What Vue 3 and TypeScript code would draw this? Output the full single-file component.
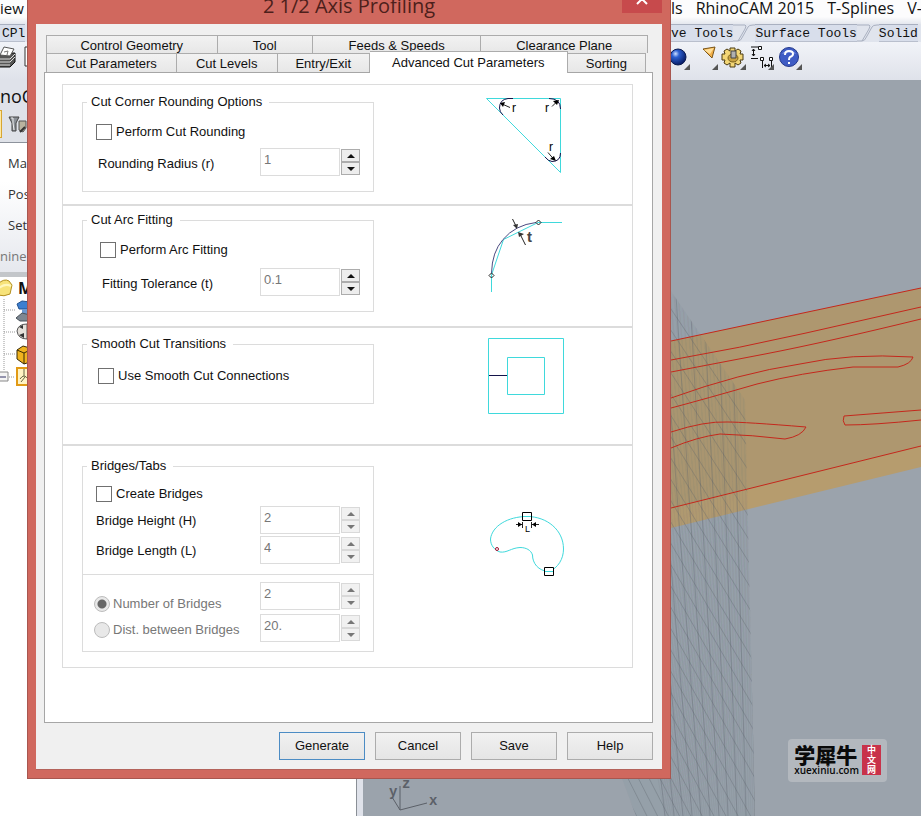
<script setup lang="ts">
import { reactive, ref } from 'vue'

interface Tab {
  label: string
  grow: number
  active?: boolean
}

interface Line {
  x1: number
  y1: number
  x2: number
  y2: number
}

const backTabs: Tab[] = [
  { label: 'Control Geometry', grow: 171 },
  { label: 'Tool', grow: 95 },
  { label: 'Feeds & Speeds', grow: 169 },
  { label: 'Clearance Plane', grow: 167 },
]

const frontTabs: Tab[] = [
  { label: 'Cut Parameters', grow: 130 },
  { label: 'Cut Levels', grow: 101 },
  { label: 'Entry/Exit', grow: 92 },
  { label: 'Advanced Cut Parameters', grow: 199, active: true },
  { label: 'Sorting', grow: 78 },
]

const form = reactive({
  rounding: false,
  radius: '1',
  arcFitting: false,
  tolerance: '0.1',
  smooth: false,
  bridges: false,
  height: '2',
  length: '4',
  count: '2',
  distance: '20.',
})

const spacingMode = ref<'count' | 'distance'>('count')
const actions = ['Generate', 'Cancel', 'Save', 'Help']
const machineRows = ['Ma', 'Pos', 'Set']

function step(key: 'radius' | 'tolerance', delta: number): void {
  form[key] = String(Math.max(0, Math.round((Number(form[key]) + delta) * 10) / 10))
}

// Wire mesh of the stock wall: leaning uprights crossed by falling diagonals.
const uprights: Line[] = Array.from({ length: 11 }, (_, i) => {
  const top = 745 - i * 14
  return { x1: top, y1: 280, x2: top + 10 + i * 5, y2: 816 }
})
const diagonals: Line[] = Array.from({ length: 36 }, (_, i) => {
  const y = 291 + i * 20 - 108
  return { x1: 600, y1: y, x2: 760, y2: y + 236 + i * 3 }
})
const fineLines: Line[] = Array.from({ length: 46 }, (_, i) => {
  const top = 745 - i * 4
  return { x1: top, y1: 280, x2: top + 10 + i * 2, y2: 816 }
})
</script>

<template>
  <div class="app">
    <nav class="menubar">
      <div class="covered"><a href="#">iew</a></div>
      <div class="exposed">
        <a href="#">ls</a>
        <a href="#">RhinoCAM 2015</a>
        <a href="#">T-Splines</a>
        <a href="#">V-</a>
      </div>
    </nav>

    <div class="tooltabs">
      <div class="covered"><button class="tooltab first">CPl</button></div>
      <div class="exposed">
        <button class="tooltab">ve Tools</button>
        <svg class="slant" viewBox="0 0 22 18"><path d="M0 1H12Q14 1 12 5L5 17H0M5 17Q8 17 10 12L15 3Q16 1 20 1H22" /></svg>
        <button class="tooltab">Surface Tools</button>
        <svg class="slant" viewBox="0 0 22 18"><path d="M0 1H12Q14 1 12 5L5 17H0M5 17Q8 17 10 12L15 3Q16 1 20 1H22" /></svg>
        <button class="tooltab">Solid</button>
      </div>
    </div>

    <div class="toolbar">
      <div class="covered">
        <button class="tool printer" aria-label="Print">
          <svg viewBox="0 0 28 38">
            <path d="M-2 15L3 11H15V20L10 25H-2Z" fill="#555" stroke="#111" />
            <path d="M0 13L4 5L14 7L10 14Z" fill="#fff" stroke="#555" />
            <path d="M-2 17H10L15 12M-2 20H10L15 15M-2 23H10" stroke="#ddd" fill="none" />
            <path d="M4 10L8 9L7 13" stroke="#777" fill="none" />
            <path d="M28 5H25V24H28" stroke="#333" fill="#fff" />
          </svg>
        </button>
      </div>
      <div class="exposed">
        <button class="tool" aria-label="Shade">
          <svg viewBox="0 0 28 38">
            <defs>
              <radialGradient id="ball" cx="0.35" cy="0.3" r="0.75">
                <stop offset="0" stop-color="#cfe0ff" />
                <stop offset="0.3" stop-color="#2c5fd0" />
                <stop offset="1" stop-color="#04165e" />
              </radialGradient>
            </defs>
            <circle cx="16" cy="15" r="8" fill="url(#ball)" stroke="#0a1a50" />
            <path class="corner" d="M28 22V28H22Z" />
          </svg>
        </button>
        <button class="tool" aria-label="Spotlight">
          <svg viewBox="0 0 28 38">
            <path d="M13 7L25 5L22 16Z" fill="#f2b04a" stroke="#7a5518" />
            <path d="M14 8L24 6L20 12Z" fill="#ffdf9a" />
            <path class="corner" d="M28 22V28H22Z" />
          </svg>
        </button>
        <button class="tool" aria-label="Options">
          <svg viewBox="0 0 28 38">
            <path d="M12 9V6H17V9L20 7L23 9L22 12H25V18H22L23 21L20 23L17 21V25H12V21L9 23L6 21L7 18H4V12H7L6 9L9 7Z" fill="#f3d676" stroke="#4a3a10" />
            <ellipse cx="15" cy="16" rx="5" ry="4" fill="#c9a242" stroke="#7a611c" />
            <path d="M13 9H18V16H13Z" fill="#b0b0b0" stroke="#444" />
            <path class="corner" d="M28 22V28H22Z" />
          </svg>
        </button>
        <button class="tool" aria-label="Dimension">
          <svg viewBox="0 0 28 38">
            <path d="M5 5H12M7.500 7V14M5 16.500H12M16.500 18V26M25.500 18V26M18 23.500H24M6 9L7.500 7L9 9M6 12L7.500 14L9 12M20 22L18 23.500L20 25M22 22L24 23.500L22 25" fill="none" stroke="#111" />
            <path d="M12.500 4.500H15.500V7.500H12.500ZM14.500 15.500H17.500V18.500H14.500ZM23.500 15.500H26.500V18.500H23.500Z" fill="#fff" stroke="#111" />
            <path class="corner" d="M28 22V28H22Z" />
          </svg>
        </button>
        <button class="tool" aria-label="Help topics">
          <svg viewBox="0 0 28 38">
            <circle cx="15" cy="15" r="9.500" fill="#3f5cc4" stroke="#24398c" />
            <path d="M8 12A8 7 0 0 1 22 12Q15 9 8 12Z" fill="#7f97e6" />
            <path d="M11 13Q11 9 15 9Q19 9 19 12Q19 14 16 15Q15 16 15 18M15 20V22" fill="none" stroke="#fff" stroke-width="2" />
            <path class="corner" d="M28 22V28H22Z" />
          </svg>
        </button>
      </div>
    </div>

    <div class="workspace">
      <aside class="sidebar">
        <h2>noC</h2>
        <div class="strip">
          <span class="picked"></span>
          <svg width="20" height="20" viewBox="0 0 20 20">
            <path d="M1 2H11L8 8V16H4V8Z" fill="#8b9096" stroke="#444" />
            <path d="M3 3H5V8L6 15" stroke="#eee" fill="none" />
            <path d="M11 6H18V13L15 17L11 15Z" fill="#b9b39f" stroke="#555" />
            <path d="M12 17L17 12" stroke="#333" stroke-width="2" />
          </svg>
        </div>
        <div class="machine">
          <p v-for="row in machineRows" :key="row">{{ row }}</p>
          <p class="caption">nine S</p>
        </div>
        <div class="tree">
          <svg class="tree-art" width="27" height="110" viewBox="0 0 27 110">
            <path d="M4 22V94M4 33H16M4 55H16M4 77H16M9 100H15" fill="none" stroke="#999" stroke-dasharray="1 1" />
            <path d="M-2 7Q4 1 9 4L12 8L10 17Q4 20 -2 18Z" fill="#f7e37a" stroke="#b38f1e" />
            <path d="M-1 11Q5 6 11 9" stroke="#fff7bd" stroke-width="2" fill="none" />
            <path d="M17 27L22 24L30 25V32H19Z" fill="#3d7fd0" stroke="#23528f" />
            <path d="M22 32H27V39H22Z" fill="#6d99d0" />
            <path d="M16 41L22 36L30 38V44H20Z" fill="#7d8792" stroke="#4b535b" />
            <path d="M17 54Q18 47 27 47V62Q18 62 17 54Z" fill="#e4e0da" stroke="#555" />
            <path d="M19 50L23 48V52ZM19 58L24 56V61Z" fill="#333" />
            <path d="M17 73L23 69L30 71V85L24 87L17 82Z" fill="#f0b31f" stroke="#392a05" />
            <path d="M17 73L24 76L30 73M24 76V87" fill="none" stroke="#392a05" />
            <path d="M17 91H30V108H17Z" fill="#fff3c4" stroke="#e19a15" stroke-width="2" />
            <path d="M24 92V99M20 102Q24 96 28 102M21 105L25 100" stroke="#664" fill="none" />
            <path d="M-4 95H8V104H-4Z" fill="#f4f4f4" stroke="#888" />
            <path d="M-1 100H6" stroke="#336" />
          </svg>
          <strong>M</strong>
        </div>
      </aside>
      <div class="splitter"></div>

      <main class="viewport">
        <svg class="scene" viewBox="363 80 558 736" preserveAspectRatio="xMaxYMin slice">
          <defs>
            <clipPath id="wall">
              <path d="M671 291L745 400L755 816H636L600 720V291Z" />
            </clipPath>
          </defs>
          <path d="M600 356L671 341L921 288V467L671 528L600 545Z" fill="#b69c6e" />
          <path d="M600 356L671 341L921 288V446L671 508L600 526Z" fill="#ae976f" />
          <g clip-path="url(#wall)">
            <path d="M600 280H760V816H600Z" fill="#7d8590" opacity="0.1" />
            <line v-for="(l, i) in fineLines" :key="'f' + i" v-bind="l" stroke="#6b727c" stroke-width="0.7" opacity="0.14" />
            <line v-for="(l, i) in diagonals" :key="'d' + i" v-bind="l" stroke="#5c636c" stroke-width="0.6" opacity="0.55" />
            <line v-for="(l, i) in uprights" :key="'u' + i" v-bind="l" stroke="#5c636c" stroke-width="0.7" opacity="0.5" />
          </g>
          <g fill="none" stroke="#c4281c">
            <path d="M671 341L921 288" />
            <path d="M671 360Q740 348 806 333L921 307" />
            <path d="M671 372L765 354Q827 342 921 319" />
            <path d="M671 398Q740 373 800 364Q850 353 913 357Q911 364 898 367H853Q800 373 757 384Q705 399 671 408" />
            <path d="M671 432Q705 421 727 422Q745 422 806 427Q802 436 785 439Q752 435 720 434Q697 437 671 448" />
            <path d="M921 410L844 416Q842 421 845 425Q873 425 921 420" />
            <path d="M671 508L921 446" />
          </g>
          <g class="axes">
            <path d="M392 797L400 810V786M400 810L427 803" />
            <text x="402" y="788">z</text>
            <text x="429" y="805">x</text>
            <text x="389" y="796">y</text>
          </g>
        </svg>
        <div class="watermark">
          <div class="brand">
            <span class="brand-name">学犀牛</span>
            <span class="brand-url">xuexiniu.com</span>
          </div>
          <div class="seal"><span>中</span><span>文</span><span>网</span></div>
        </div>
      </main>
    </div>

    <section class="dialog" role="dialog" aria-labelledby="dialog-title">
      <header>
        <h1 id="dialog-title">2 1/2 Axis Profiling</h1>
        <button class="close" aria-label="Close">
          <svg width="12" height="12" viewBox="0 0 12 12"><path d="M1 1L11 11M11 1L1 11" stroke="#fff" stroke-width="2" /></svg>
        </button>
      </header>

      <div class="client">
        <div class="tabs" role="tablist">
          <div class="tabrow back">
            <button v-for="t in backTabs" :key="t.label" role="tab" :style="{ flexGrow: t.grow }">{{ t.label }}</button>
          </div>
          <div class="tabrow">
            <button
              v-for="t in frontTabs"
              :key="t.label"
              role="tab"
              :class="{ active: t.active }"
              :aria-selected="!!t.active"
              :style="{ flexGrow: t.grow }"
            >{{ t.label }}</button>
          </div>
        </div>

        <div class="page">
          <div class="options">
            <div class="group rounding">
              <fieldset>
                <legend>Cut Corner Rounding Options</legend>
                <label class="check"><input v-model="form.rounding" type="checkbox" />Perform Cut Rounding</label>
                <div class="field">
                  <label for="radius">Rounding Radius (r)</label>
                  <div class="spinner">
                    <input id="radius" v-model="form.radius" type="text" />
                    <span class="arrows">
                      <button aria-label="Increase radius" @click="step('radius', 1)"><i class="up"></i></button>
                      <button aria-label="Decrease radius" @click="step('radius', -1)"><i class="down"></i></button>
                    </span>
                  </div>
                </div>
              </fieldset>
              <svg class="figure" width="90" height="82" viewBox="482 94 90 82">
                <path class="cyan" d="M486.500 98.500H560.500V172.500Z" />
                <path class="navy" d="M513 98.500H508Q499.500 99.500 499.500 108Q499.500 112 503 115M549 98.500Q560.500 98.500 560.500 109M560.500 153Q560.500 161.500 552 161.500Q548 161 545 157" />
                <path class="ink" d="M501 103.500L510 107.500M552 106.500L557 101.500M548 152.500L554 159.500" />
                <path d="M500 103L505 102L503 107ZM559 100L557 105L553 101ZM556 161L550 159L554 156Z" />
                <text x="512" y="112">r</text>
                <text x="545" y="112">r</text>
                <text x="549" y="151">r</text>
              </svg>
            </div>

            <div class="group fitting">
              <fieldset>
                <legend>Cut Arc Fitting</legend>
                <label class="check"><input v-model="form.arcFitting" type="checkbox" />Perform Arc Fitting</label>
                <div class="field">
                  <label for="tolerance">Fitting Tolerance (t)</label>
                  <div class="spinner">
                    <input id="tolerance" v-model="form.tolerance" type="text" />
                    <span class="arrows">
                      <button aria-label="Increase tolerance" @click="step('tolerance', 0.1)"><i class="up"></i></button>
                      <button aria-label="Decrease tolerance" @click="step('tolerance', -0.1)"><i class="down"></i></button>
                    </span>
                  </div>
                </div>
              </fieldset>
              <svg class="figure" width="90" height="84" viewBox="482 212 90 84">
                <path class="cyan" d="M491.500 292V275L503.500 239.500L538 222.500H562" />
                <path class="navy soft" d="M491.500 273Q492 252 503 239.500Q515 225 536 222.500" />
                <path class="ink" d="M489 275.500L491.500 273L494 275.500L491.500 278ZM536 222.500L538.500 220L541 222.500L538.500 225ZM512.500 219L516.500 227M525.500 245L520.500 235" />
                <path d="M513 225L518 224L517 229ZM518 232L524 234L519 237Z" fill="#333" />
                <text class="tee" x="527" y="242">t</text>
              </svg>
            </div>

            <div class="group smooth">
              <fieldset>
                <legend>Smooth Cut Transitions</legend>
                <label class="check"><input v-model="form.smooth" type="checkbox" />Use Smooth Cut Connections</label>
              </fieldset>
              <svg class="figure" width="90" height="82" viewBox="482 336 90 82">
                <path class="cyan" d="M488.500 338.500H563.500V413.500H488.500ZM507.500 357.500H544.500V394.500H507.500Z" />
                <path class="navy" d="M489 375.500H507" />
              </svg>
            </div>

            <div class="group bridges">
              <fieldset>
                <legend>Bridges/Tabs</legend>
                <label class="check"><input v-model="form.bridges" type="checkbox" />Create Bridges</label>
                <div class="field">
                  <label for="height">Bridge Height (H)</label>
                  <div class="spinner">
                    <input id="height" v-model="form.height" type="text" disabled />
                    <span class="arrows">
                      <button aria-label="Increase height" disabled><i class="up"></i></button>
                      <button aria-label="Decrease height" disabled><i class="down"></i></button>
                    </span>
                  </div>
                </div>
                <div class="field">
                  <label for="length">Bridge Length (L)</label>
                  <div class="spinner">
                    <input id="length" v-model="form.length" type="text" disabled />
                    <span class="arrows">
                      <button aria-label="Increase length" disabled><i class="up"></i></button>
                      <button aria-label="Decrease length" disabled><i class="down"></i></button>
                    </span>
                  </div>
                </div>
                <div class="spacing">
                  <div class="field lowered">
                    <label class="choice"><input v-model="spacingMode" type="radio" name="mode" value="count" disabled />Number of Bridges</label>
                    <div class="spinner">
                      <input v-model="form.count" type="text" aria-label="Number of Bridges" disabled />
                      <span class="arrows">
                        <button aria-label="Increase count" disabled><i class="up"></i></button>
                        <button aria-label="Decrease count" disabled><i class="down"></i></button>
                      </span>
                    </div>
                  </div>
                  <div class="field">
                    <label class="choice"><input v-model="spacingMode" type="radio" name="mode" value="distance" disabled />Dist. between Bridges</label>
                    <div class="spinner">
                      <input v-model="form.distance" type="text" aria-label="Dist. between Bridges" disabled />
                      <span class="arrows">
                        <button aria-label="Increase distance" disabled><i class="up"></i></button>
                        <button aria-label="Decrease distance" disabled><i class="down"></i></button>
                      </span>
                    </div>
                  </div>
                </div>
              </fieldset>
              <svg class="figure" width="90" height="122" viewBox="482 458 90 122">
                <path class="cyan" d="M549 571.500C538 571 532.500 563 532.500 555C531 550 526 547.500 520 547.500C511 548 507 553 500 552C494 550 490.500 545 490.500 539C492 526 508 516.500 527 516.500C547 516.500 563.500 530 563.500 549C563.500 559 558 568 549 571.500Z" />
                <path class="box" d="M522.500 512.500H531.500V520.500H522.500ZM544.500 567.500H553.500V575.500H544.500Z" />
                <path class="ink" d="M522.500 522V528M531.500 522V528M516 524.500H522M532 524.500H539" />
                <path d="M522 524.500L518 522V527ZM532 524.500L536 522V527Z" />
                <path class="cyan" d="M523 516.500H531M545 571.500H553" />
                <circle cx="497" cy="549" r="1.500" fill="#fff" stroke="#a01030" />
                <text class="ell" x="525" y="532">L</text>
              </svg>
            </div>
          </div>
        </div>

        <footer>
          <button v-for="(a, i) in actions" :key="a" :class="{ primary: i === 0 }">{{ a }}</button>
        </footer>
      </div>
    </section>
  </div>
</template>

<style>
body {
  margin: 0;
}
</style>

<style scoped>
* {
  box-sizing: border-box;
}

.app {
  --dialog-right: 250px;
  position: relative;
  display: flex;
  flex-direction: column;
  min-height: 100vh;
  overflow: hidden;
  background: #fff;
  color: #111;
  font: 13px/16px "Liberation Sans", Arial, sans-serif;
}

button,
input {
  margin: 0;
  font: inherit;
  color: inherit;
}

a {
  color: inherit;
  text-decoration: none;
}

.menubar,
.tooltabs,
.toolbar {
  display: grid;
  grid-template-columns: 1fr var(--dialog-right);
  white-space: nowrap;
}

.covered,
.exposed {
  display: flex;
  min-width: 0;
}

.menubar {
  height: 24px;
  background: linear-gradient(#fcfcfd 70%, #e4e7ee);
  font: 16px/16px "Open Sans", "Noto Sans", sans-serif;
}

.menubar .covered {
  font-size: 15px;
}

.menubar .exposed {
  gap: 13px;
}

.tooltabs {
  height: 18px;
  background: #e0e4ed;
  font: 13px/18px "Liberation Mono", monospace;
}

.tooltab {
  padding: 2px 0 0;
  border: 0;
  border-top: 1px solid #a9b0c0;
  border-bottom: 1px solid #b9bfcd;
  background: #d8deeb;
  line-height: 14px;
  white-space: nowrap;
}

.tooltab.first {
  padding-left: 2px;
}

.slant {
  flex: none;
  width: 22px;
  height: 18px;
  fill: none;
  stroke: #a9b0c0;
}

.toolbar {
  height: 38px;
  background: linear-gradient(#f1f3f8, #dfe2ea);
}

.toolbar .exposed {
  margin-left: -9px;
}

.tool {
  width: 28px;
  height: 38px;
  padding: 0;
  border: 0;
  background: none;
}

.tool svg {
  display: block;
}

.corner {
  fill: #555;
}

.workspace {
  display: grid;
  flex: 1;
  grid-template-columns: 356px 7px 1fr;
}

.sidebar {
  display: flex;
  flex-direction: column;
  font-family: "Open Sans", "Noto Sans", sans-serif;
}

.sidebar h2 {
  height: 30px;
  margin: 0;
  background: #dfe2ea;
  font-size: 18px;
  font-weight: 400;
  line-height: 32px;
}

.strip {
  display: flex;
  gap: 6px;
  height: 33px;
  border-bottom: 1px solid #8d939c;
  background: #dfe2e8;
}

.strip svg {
  margin-top: 5px;
}

.picked {
  width: 2px;
  height: 28px;
  border: 1px solid #d7a632;
  border-left: 0;
  background: #ffe9a0;
}

.machine {
  height: 134px;
  padding-top: 5px;
  border-bottom: 5px solid #c3c6ca;
  background: linear-gradient(#fff 30%, #e6e8ee);
  color: #333;
}

.machine p {
  margin: 0;
  padding-left: 8px;
  line-height: 31px;
}

.machine .caption {
  padding-left: 0;
  color: #777;
}

.tree {
  position: relative;
  padding-left: 18px;
  font-size: 16px;
  line-height: 22px;
}

.tree-art {
  position: absolute;
  top: 0;
  left: 0;
}

.splitter {
  border-left: 1px solid #8a8f96;
  background: #dfe2ea;
}

.viewport {
  position: relative;
  background: #9ba3ac;
}

.scene {
  position: absolute;
  width: 100%;
  height: 100%;
}

.axes path {
  fill: none;
  stroke: #5b6068;
}

.axes text {
  fill: #5b6068;
  font: bold 14px "Liberation Mono", monospace;
}

.watermark {
  position: absolute;
  right: 34px;
  bottom: 34px;
  display: flex;
  gap: 3px;
  padding: 6px;
  border-radius: 4px;
  background: #b3b8be;
}

.brand {
  display: flex;
  flex-direction: column;
  color: #0a0a0a;
}

.brand-name {
  font: 900 21px/19px "Noto Sans CJK SC", sans-serif;
}

.brand-url {
  font: 600 10px/12px "Open Sans", sans-serif;
}

.seal {
  display: flex;
  flex-direction: column;
  align-items: center;
  width: 19px;
  height: 30px;
  background: #c8324a;
  color: #fff;
  font: bold 9px/10px "Noto Sans CJK SC", sans-serif;
}

.dialog {
  position: absolute;
  top: 0;
  right: var(--dialog-right);
  left: 27px;
  padding: 0 8px 8px;
  border: 1px solid #a8564f;
  border-top: 0;
  background: #d0685e;
}

header {
  position: relative;
  height: 24px;
}

h1 {
  margin: 0;
  color: #4d1f1b;
  font: 400 20px/12px "Open Sans", "Noto Sans", sans-serif;
  text-align: center;
}

.close {
  position: absolute;
  top: 0;
  right: 0;
  display: flex;
  align-items: flex-start;
  justify-content: center;
  width: 40px;
  height: 13px;
  padding: 0;
  border: 0;
  background: #c74a4c;
  overflow: hidden;
}

.close svg {
  flex: none;
  margin-top: -7px;
}

.client {
  padding: 11px 9px 9px 8px;
  border-bottom: 1px solid #b4635b;
  background: #f0f0f0;
}

.tabs {
  padding: 0 5px 0 2px;
}

.tabrow {
  display: flex;
  height: 19px;
}

.tabrow.back {
  height: 18px;
}

.tabrow:last-child {
  padding-right: 2px;
}

.tabrow button {
  flex: 1 1 0;
  min-width: 0;
  padding: 2px 0 0;
  border: 1px solid #acacac;
  border-bottom: 0;
  border-left-width: 0;
  background: linear-gradient(#f2f2f2, #e7e7e7);
  line-height: 16px;
  white-space: nowrap;
}

.tabrow button:first-child {
  border-left-width: 1px;
}

.tabrow .active {
  position: relative;
  height: 22px;
  margin-top: -2px;
  padding-bottom: 2px;
  background: #fff;
}

.page {
  padding: 11px 19px 54px 17px;
  border: 1px solid #a6a6a6;
  background: #fff;
}

.options {
  border: 1px solid #dcdcdc;
}

.group {
  display: flex;
  align-items: flex-start;
  padding-left: 19px;
  border-bottom: 2px solid #dcdcdc;
}

.group:last-child {
  border-bottom: 0;
}

.rounding {
  padding-top: 9px;
  padding-bottom: 12px;
}

.fitting {
  padding-top: 6px;
  padding-bottom: 14px;
}

.smooth {
  padding-top: 8px;
  padding-bottom: 26px;
}

.bridges {
  padding-top: 12px;
  padding-bottom: 15px;
}

fieldset {
  width: 292px;
  margin: 0;
  padding: 10px 13px 15px 13px;
  border: 1px solid #dcdcdc;
}

legend {
  margin-left: -9px;
  padding: 0 7px 0 4px;
}

.check {
  display: flex;
  align-items: center;
  gap: 4px;
  height: 24px;
}

.check input {
  width: 16px;
  height: 16px;
  border: 1px solid #707070;
  background: #fff;
  appearance: none;
}

.check input:checked {
  background: #4a4a4a;
}

.field {
  display: flex;
  justify-content: space-between;
  margin-top: 4px;
}

.field > label {
  padding: 8px 0 4px 2px;
}

.fitting fieldset {
  padding-left: 17px;
}

.fitting legend {
  margin-left: -13px;
}

.fitting .field {
  margin-top: 6px;
}

.smooth fieldset {
  padding: 12px 15px 15px;
}

.smooth legend {
  margin-left: -11px;
}

.bridges fieldset {
  padding-top: 8px;
  padding-bottom: 9px;
}

.bridges .check + .field {
  margin-top: 0;
}

.bridges .field {
  margin-top: 2px;
}

.bridges .field > label {
  padding: 7px 0 4px;
}

.spacing {
  margin: 10px -13px 0;
  padding: 5px 13px 0 11px;
  border-top: 1px solid #dcdcdc;
}

.choice {
  display: flex;
  align-items: center;
  gap: 3px;
  color: #777;
}

.bridges .lowered > .choice {
  padding: 14px 0 0;
}

.choice input {
  width: 16px;
  height: 16px;
  border: 1px solid #bcbcbc;
  border-radius: 50%;
  background: #e8e8e8;
  appearance: none;
}

.choice input:checked {
  background: radial-gradient(circle, #666 4px, #e8e8e8 5px);
}

.spinner {
  display: flex;
  gap: 1px;
  width: 100px;
  height: 28px;
}

.spinner input {
  flex: 1;
  min-width: 0;
  height: 28px;
  padding: 0 3px 6px;
  border: 1px solid #dcdcdc;
  border-radius: 0;
  background: #fff;
  color: #777;
}

.arrows {
  display: flex;
  flex-direction: column;
  width: 19px;
  padding: 1px 0;
}

.arrows button {
  display: flex;
  flex: 1;
  align-items: center;
  justify-content: center;
  padding: 0;
  border: 1px solid #acacac;
  background: #ededed;
}

.arrows button:disabled {
  border-color: #d9d9d9;
  background: #f1f1f1;
}

.up,
.down {
  border: 4px solid transparent;
}

.up {
  border-top: 0;
  border-bottom-color: #111;
}

.down {
  border-bottom: 0;
  border-top-color: #111;
}

button:disabled .up {
  border-bottom-color: #777;
}

button:disabled .down {
  border-top-color: #777;
}

.figure {
  flex: none;
  margin-left: 108px;
}

.figure text {
  font: 12px "Liberation Sans", sans-serif;
}

.figure .tee {
  fill: #444;
  font-size: 15px;
  font-weight: bold;
}

.figure .ell {
  font-size: 9px;
}

.cyan {
  fill: none;
  stroke: #3fd9dc;
}

.navy {
  fill: none;
  stroke: #14144a;
}

.navy.soft {
  stroke: #4a4a80;
}

.ink {
  fill: none;
  stroke: #222;
}

.box {
  fill: #fff;
  stroke: #000;
}

footer {
  display: flex;
  justify-content: flex-end;
  gap: 10px;
  padding-top: 9px;
}

footer button {
  width: 86px;
  height: 28px;
  padding: 0;
  border: 1px solid #acacac;
  background: linear-gradient(#f1f1f1, #e5e5e5);
}

footer .primary {
  border-color: #4c8cc4;
}
</style>
